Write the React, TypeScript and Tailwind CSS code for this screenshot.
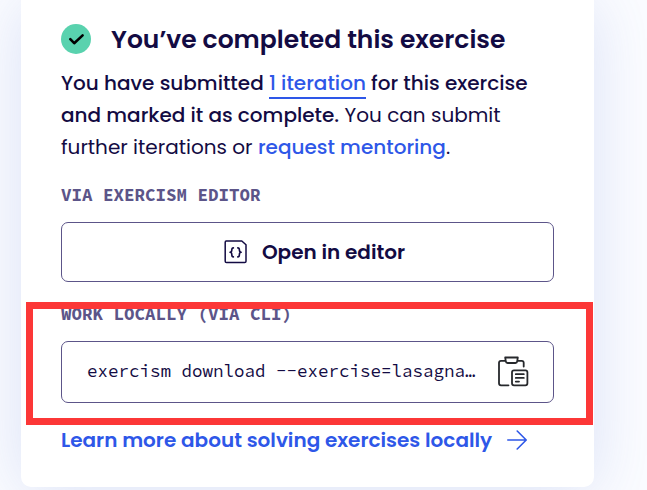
import React from "react";

const mono = "font-['Source_Code_Pro','DejaVu_Sans_Mono',monospace]";

function CompletedBadge() {
  return (
    <svg className="h-[30px] w-[30px] shrink-0" viewBox="0 0 30 30" fill="none">
      <circle cx="15" cy="15" r="15" fill="#59d2ae" />
      <path d="M9.3 15.2 13.2 19.2 21.6 11.4" stroke="#000" strokeWidth="2.6" strokeLinecap="round" strokeLinejoin="round" />
    </svg>
  );
}

function EditorIcon() {
  return (
    <svg className="h-6 w-6 shrink-0" viewBox="0 0 24 24" fill="none" stroke="#130b43" strokeLinecap="round" strokeLinejoin="round">
      <path d="M2.2 1H17.8L22 4.8V21.2Q22 22.5 20.7 22.5H2.5Q1.2 22.5 1.2 21.2V2.2Q1.2 1 2.2 1Z" strokeWidth="1.5" />
      <path d="M9.4 7.9C7.8 7.9 7.8 8.9 7.8 10.1S7.2 12.3 6 12.3C7.2 12.3 7.8 13.3 7.8 14.5S7.8 16.9 9.4 16.9M13.8 7.9C15.4 7.9 15.4 8.9 15.4 10.1S16 12.3 17.2 12.3C16 12.3 15.4 13.3 15.4 14.5S15.4 16.9 13.8 16.9" strokeWidth="1.6" />
    </svg>
  );
}

function ClipboardIcon() {
  return (
    <svg className="h-8 w-8 shrink-0" viewBox="0 0 32 32" fill="none" stroke="#26282c" strokeWidth="1.8" strokeLinecap="round" strokeLinejoin="round">
      <path d="M11.5 29.3H4Q2 29.3 2 27.3V6.8Q2 4.8 4 4.8H8M21 4.8H24.7Q26.7 4.8 26.7 6.8V10.5" />
      <path d="M8.2 1.5H20.8L20.2 5.4Q20 7 18.4 7H10.6Q9 7 8.8 5.4Z" />
      <rect x="15" y="14.3" width="15.4" height="15" rx="2" />
      <path d="M18.8 18.2H26.8M18.8 21.9H26.8M18.8 25.6H22" />
    </svg>
  );
}

function ArrowIcon() {
  return (
    <svg className="h-5 w-5 shrink-0" viewBox="0 0 20 20" fill="none" stroke="#2e57e8" strokeWidth="1.6" strokeLinecap="round" strokeLinejoin="round">
      <path d="M0.8 10H19M10.2 1 19.2 10 10.2 19" />
    </svg>
  );
}

export default function App() {
  return (
    <div className="relative h-[490px] w-[647px] overflow-hidden bg-[#fbfcff] pl-[21px] font-['Poppins','Inter',sans-serif] text-[#130b43]">
      <main className="h-[487px] w-[573px] rounded-b-[10px] bg-white px-10 pt-5 shadow-[0_4px_64px_rgba(79,114,205,0.19)]">
        <header className="flex h-[38px] items-center gap-5">
          <CompletedBadge />
          <h1 className="mt-0.5 whitespace-nowrap text-[25px] font-semibold leading-[38px]">You’ve completed this exercise</h1>
        </header>
        <div className="mt-[9px] whitespace-nowrap text-xl leading-8">
          <p className="font-medium">
            <span>You have submitted </span>
            <a className="inline-block h-8 border-b-2 border-[#2e57e8] text-[#2e57e8]">1 iteration</a>
            <span> for this exercise</span>
          </p>
          <p>
            <span className="font-medium">and marked it as complete.</span>
            <span> You can submit</span>
          </p>
          <p>
            <span>further iterations or </span>
            <a className="font-medium text-[#2e57e8]">request mentoring</a>.
          </p>
        </div>
        <h2 className={`mt-5 h-6 whitespace-nowrap text-[17.5px] font-bold leading-6 text-[#5c5589] ${mono}`}>VIA EXERCISM EDITOR</h2>
        <button className="mt-[15px] flex h-[60px] w-[493px] items-center justify-center gap-[14px] rounded-[7px] border border-[#5c5589] pl-[14px] text-xl font-semibold">
          <EditorIcon />
          <span>Open in editor</span>
        </button>
        <h2 className={`mt-5 h-6 whitespace-nowrap text-[17.5px] font-bold leading-6 text-[#5c5589] ${mono}`}>WORK LOCALLY (VIA CLI)</h2>
        <div className="mt-[15px] flex h-[62px] w-[493px] items-center justify-between rounded-[7px] border border-[#5c5589] pl-[25px] pr-6">
          <code className={`whitespace-nowrap pb-0.5 text-[17.5px] leading-7 ${mono}`}>exercism download --exercise=lasagna…</code>
          <ClipboardIcon />
        </div>
        <a className="mt-[22px] flex h-[30px] items-center gap-[15px] whitespace-nowrap text-xl font-semibold text-[#2e57e8]">
          <span>Learn more about solving exercises locally</span>
          <ArrowIcon />
        </a>
      </main>
      <div className="absolute left-[26px] top-[302px] h-[123px] w-[567px] border-[7px] border-[#fc3737]" />
    </div>
  );
}
